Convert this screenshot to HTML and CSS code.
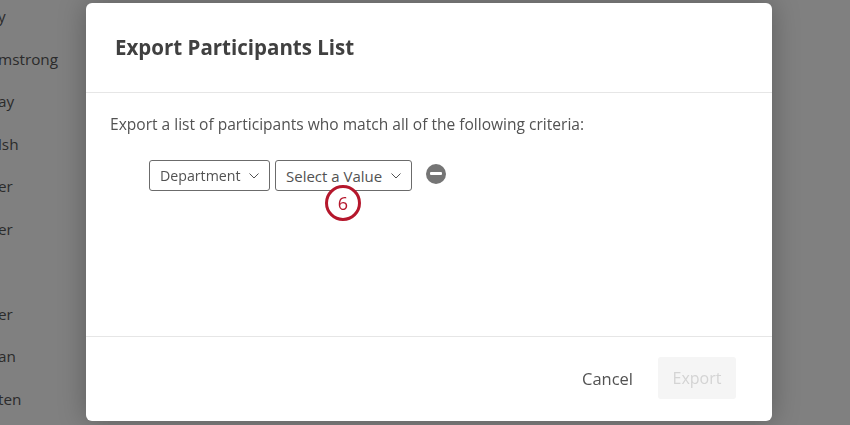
FILE: index.html
```html
<!DOCTYPE html>
<html lang="en">
<head>
    <meta charset="UTF-8">
    <title>Export Participants List</title>
    <link rel="stylesheet" href="styles.css">
</head>
<body>
    <ul class="names">
        <li>y</li>
        <li>mstrong</li>
        <li>ay</li>
        <li>lsh</li>
        <li>er</li>
        <li>er</li>
        <li></li>
        <li>er</li>
        <li>an</li>
        <li>ten</li>
    </ul>
    <div class="overlay">
        <div class="modal">
            <header class="modal-header">
                <h1>Export Participants List</h1>
            </header>
            <main class="modal-body">
                <p>Export a list of participants who match all of the following criteria:</p>
                <div class="criteria">
                    <button type="button" class="select select-dept">
                        Department
                        <svg width="10" height="6" viewBox="0 0 10 6"><path d="M0.5 0.5 L5 5 L9.5 0.5" fill="none" stroke="#525252" stroke-width="1"/></svg>
                    </button>
                    <div class="value-wrap">
                        <button type="button" class="select select-value">
                            Select a Value
                            <svg width="10" height="6" viewBox="0 0 10 6"><path d="M0.5 0.5 L5 5 L9.5 0.5" fill="none" stroke="#525252" stroke-width="1"/></svg>
                        </button>
                        <span class="callout">6</span>
                    </div>
                    <span class="remove"><span class="remove-bar"></span></span>
                </div>
            </main>
            <footer class="modal-footer">
                <button type="button" class="btn-cancel">Cancel</button>
                <button type="button" class="btn-export">Export</button>
            </footer>
        </div>
    </div>
</body>
</html>
```

FILE: styles.css
```css
* {
    box-sizing: border-box;
}
html, body {
    height: 100%;
}
body {
    margin: 0;
    overflow: hidden;
    background: #808080;
    color: #525252;
    font-family: "Open Sans", "Noto Sans", sans-serif;
}
.names {
    list-style: none;
    margin: -5px 0 0 -2px;
    padding: 0;
    color: #2b2b2b;
    font-size: 15.3px;
}
.names li {
    height: 42.5px;
    line-height: 42.5px;
}
.overlay {
    position: fixed;
    inset: 0;
    display: flex;
    justify-content: center;
    align-items: flex-start;
    padding: 3px 78px 0 86px;
}
.modal {
    width: 686px;
    height: 418px;
    display: flex;
    flex-direction: column;
    background: #fff;
    border-radius: 6px;
    box-shadow: 0 0 28px rgba(0, 0, 0, 0.28);
}
.modal-header {
    height: 90px;
    padding: 0 29px 2px;
    display: flex;
    align-items: center;
    border-bottom: 1px solid #e6e6e6;
}
h1 {
    margin: 0;
    font-size: 20.5px;
    font-weight: 700;
    color: #404040;
}
.modal-body {
    flex-grow: 1;
    padding: 20px 24px 0;
}
.modal-body p {
    margin: 0 0 25px;
    font-size: 15.56px;
    line-height: 22px;
}
.criteria {
    display: flex;
    align-items: center;
    gap: 5px;
    padding-left: 39px;
}
.select {
    height: 31px;
    display: flex;
    align-items: center;
    justify-content: space-between;
    padding: 0 10px;
    background: #fff;
    border: 1px solid #6b6b6b;
    border-radius: 3px;
    color: #525252;
    font-family: inherit;
    font-size: 15px;
}
.select-dept {
    width: 121px;
    font-size: 14.2px;
}
.select-value {
    width: 137px;
}
.value-wrap {
    position: relative;
}
.callout {
    position: absolute;
    left: 50px;
    top: 25px;
    width: 36px;
    height: 36px;
    display: flex;
    align-items: center;
    justify-content: center;
    background: #fff;
    border: 3px solid #b5172c;
    border-radius: 50%;
    color: #b5172c;
    font-size: 18px;
}
.remove {
    width: 20px;
    height: 20px;
    margin: -4px 0 0 9px;
    display: flex;
    align-items: center;
    justify-content: center;
    background: #757575;
    border-radius: 50%;
}
.remove-bar {
    width: 12px;
    height: 3px;
    background: #fff;
    border-radius: 1px;
}
.modal-footer {
    height: 85px;
    padding: 0 36px 2px 0;
    display: flex;
    justify-content: flex-end;
    align-items: center;
    gap: 25px;
    border-top: 1px solid #e6e6e6;
}
.modal-footer button {
    font-family: inherit;
    font-size: 16.5px;
    border: none;
}
.btn-cancel {
    padding: 0;
    background: none;
    color: #525252;
}
.modal-footer .btn-export {
    width: 78px;
    height: 42px;
    background: #f5f5f5;
    border-radius: 3px;
    color: #d4d4d4;
    font-size: 16px;
}
```
